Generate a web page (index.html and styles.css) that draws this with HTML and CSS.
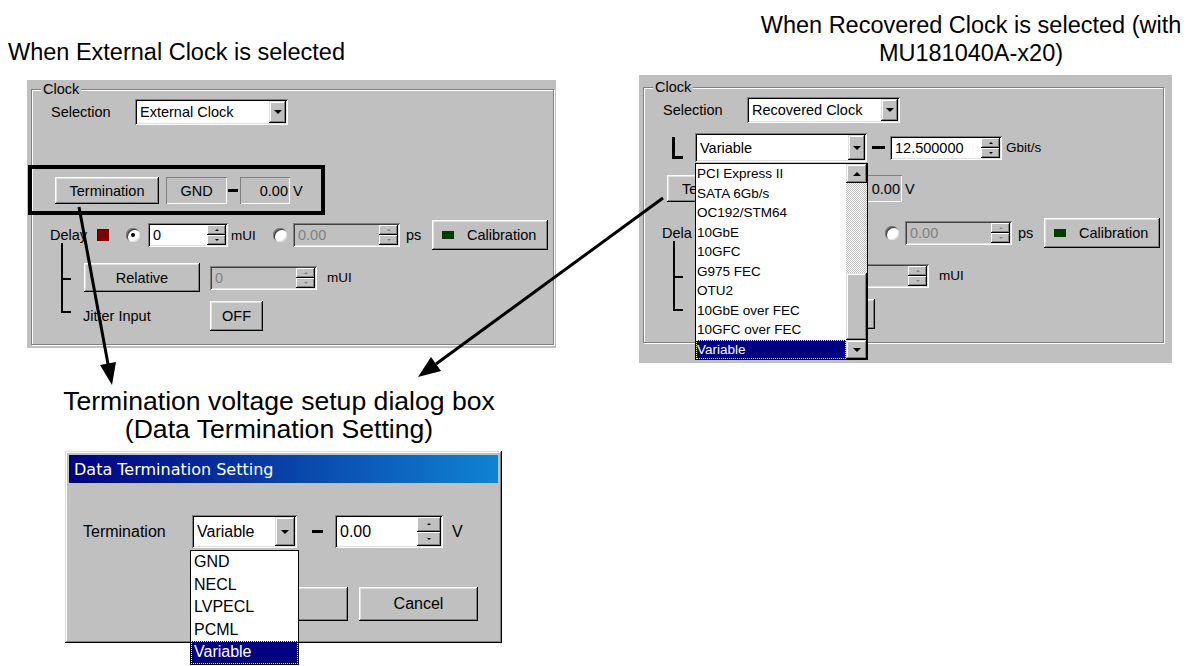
FILE: index.html
```html
<!DOCTYPE html>
<html lang="en">
<head>
  <meta charset="UTF-8">
  <title>Clock Settings</title>
  <link rel="stylesheet" href="styles.css">
</head>
<body>

<div class="page">

  <h2 class="cap cap-ext">When External Clock is selected</h2>
  <h2 class="cap cap-rec">When Recovered Clock is selected (with<br>MU181040A-x20)</h2>
  <h2 class="cap cap-dlg">Termination voltage setup dialog box<br>(Data Termination Setting)</h2>

  <!-- External Clock -->
  <div class="shot shot-ext">
    <fieldset class="group">
      <legend>Clock</legend>
      <div class="row row-sel">
        <span class="lbl lbl-sel">Selection</span>
        <div class="combo combo-sel"><span class="val">External Clock</span><span class="drop"></span></div>
      </div>
      <div class="row row-var"></div>
      <div class="row row-term">
        <button class="btn btn-term">Termination</button>
        <span class="static st-name">GND</span>
        <span class="dash dash-term"></span>
        <span class="static st-volt">0.00</span>
        <span class="unit unit-v">V</span>
      </div>
      <div class="row row-delay">
        <span class="lbl lbl-delay">Delay</span>
        <span class="led led-red"></span>
        <span class="radio radio-a on"></span>
        <div class="spinbox spin-mui"><span class="field">0</span><span class="spin"><i></i><i></i></span></div>
        <span class="unit unit-mui">mUI</span>
        <span class="radio"></span>
        <div class="spinbox spin-ps off"><span class="field">0.00</span><span class="spin"><i></i><i></i></span></div>
        <span class="unit unit-ps">ps</span>
        <button class="btn btn-cal"><span class="led led-green"></span>Calibration</button>
      </div>
      <div class="row row-rel">
        <button class="btn btn-rel">Relative</button>
        <div class="spinbox spin-rel off"><span class="field">0</span><span class="spin"><i></i><i></i></span></div>
        <span class="unit unit-rel">mUI</span>
      </div>
      <div class="row row-jit">
        <span class="lbl lbl-jit">Jitter Input</span>
        <button class="btn btn-off">OFF</button>
      </div>
      <div class="tree"></div>
    </fieldset>
  </div>

  <!-- Recovered Clock (controls under the open list keep no text) -->
  <div class="shot shot-rec">
    <fieldset class="group">
      <legend>Clock</legend>
      <div class="row row-sel">
        <span class="lbl lbl-sel">Selection</span>
        <div class="combo combo-sel"><span class="val">Recovered Clock</span><span class="drop"></span></div>
      </div>
      <div class="row row-var">
        <span class="ell"></span>
        <div class="combo combo-rate"><span class="val">Variable</span><span class="drop"></span></div>
        <span class="dash dash-var"></span>
        <div class="spinbox spin-rate"><span class="field">12.500000</span><span class="spin"><i></i><i></i></span></div>
        <span class="unit unit-rate">Gbit/s</span>
      </div>
      <div class="row row-term">
        <button class="btn btn-term btn-cut">Te</button>
        <span class="static st-name"></span>
        <span class="dash dash-term"></span>
        <span class="static st-volt">0.00</span>
        <span class="unit unit-v">V</span>
      </div>
      <div class="row row-delay">
        <span class="lbl lbl-delay">Dela</span>
        <span class="led led-red"></span>
        <span class="radio radio-a on"></span>
        <div class="spinbox spin-mui"><span class="field"></span><span class="spin"><i></i><i></i></span></div>
        <span class="unit unit-mui"></span>
        <span class="radio"></span>
        <div class="spinbox spin-ps off"><span class="field">0.00</span><span class="spin"><i></i><i></i></span></div>
        <span class="unit unit-ps">ps</span>
        <button class="btn btn-cal"><span class="led led-green"></span>Calibration</button>
      </div>
      <div class="row row-rel">
        <button class="btn btn-rel"></button>
        <div class="spinbox spin-rel off"><span class="field"></span><span class="spin"><i></i><i></i></span></div>
        <span class="unit unit-rel">mUI</span>
      </div>
      <div class="row row-jit">
        <span class="lbl lbl-jit"></span>
        <button class="btn btn-off"></button>
      </div>
      <div class="tree"></div>

      <div class="list list-rate">
        <ul>
          <li>PCI Express II</li>
          <li>SATA 6Gb/s</li>
          <li>OC192/STM64</li>
          <li>10GbE</li>
          <li>10GFC</li>
          <li>G975 FEC</li>
          <li>OTU2</li>
          <li>10GbE over FEC</li>
          <li>10GFC over FEC</li>
          <li class="sel">Variable</li>
        </ul>
        <div class="sbar">
          <span class="sb-btn up"></span>
          <span class="sb-track"></span>
          <span class="sb-thumb"></span>
          <span class="sb-btn down"></span>
        </div>
      </div>
    </fieldset>
  </div>

  <!-- Data Termination Setting dialog -->
  <div class="dialog">
    <div class="titlebar">Data Termination Setting</div>
    <div class="dlg-row">
      <span class="dlg-lbl">Termination</span>
      <div class="combo combo-dlg"><span class="val">Variable</span><span class="drop"></span></div>
      <span class="dash dash-dlg"></span>
      <div class="spinbox spin-dlg"><span class="field">0.00</span><span class="spin"><i></i><i></i></span></div>
      <span class="unit unit-dlg">V</span>
    </div>
    <div class="dlg-btns">
      <button class="btn btn-dlg"></button>
      <button class="btn btn-dlg btn-cancel">Cancel</button>
    </div>
    <div class="list list-dlg">
      <ul>
        <li>GND</li>
        <li>NECL</li>
        <li>LVPECL</li>
        <li>PCML</li>
        <li class="sel">Variable</li>
      </ul>
    </div>
  </div>

  <div class="mark"></div>

  <svg class="arrows" width="1193" height="666" viewBox="0 0 1193 666">
    <line x1="79" y1="207" x2="108" y2="364" stroke="#000" stroke-width="3"/>
    <polygon points="112,385 100,365 116,362" fill="#000"/>
    <line x1="663" y1="198" x2="436" y2="364" stroke="#000" stroke-width="3"/>
    <polygon points="418,377 431,357 441,371" fill="#000"/>
  </svg>

</div>

</body>
</html>
```

FILE: styles.css
```css
* {
  box-sizing: border-box;
}

body {
  margin: 0;
  background: #fff;
  font-family: "Liberation Sans", Arial, sans-serif;
  color: #000;
}

.page {
  position: relative;
  width: 1193px;
  height: 666px;
  overflow: hidden;
}

/* captions */
.cap {
  position: absolute;
  margin: 0;
  font-weight: normal;
  font-size: 23.5px;
  line-height: 28px;
  white-space: nowrap;
}

.cap-ext { left: 8px; top: 38px; }
.cap-rec { left: 741px; width: 460px; top: 11px; text-align: center; }
.cap-dlg { left: 29px; width: 500px; top: 387px; text-align: center; font-size: 26.6px; }

/* screenshot panels */
.shot {
  position: absolute;
  background: #c0c0c0;
  font-size: 14.5px;
}

.shot-ext { left: 27px; top: 80px; width: 529px; height: 268px; padding: 2px 0 0 4px; }
.shot-rec { left: 639px; top: 75px; width: 533px; height: 288px; padding: 5px 0 0 4px; }
.shot-ext .group { width: 523px; }
.shot-rec .group { width: 521px; }

.group {
  position: relative;
  margin: 0;
  padding: 0 0 13px;
  min-width: 0;
  border: 1px solid #808080;
  box-shadow: inset 1px 1px #fff, 1px 1px #fff;
}

.group legend {
  margin-left: 9px;
  padding: 0 2px;
  font-size: 14.5px;
  line-height: 14px;
  background: #c0c0c0;
}

.row {
  display: flex;
  align-items: center;
  white-space: nowrap;
}

.row-sel { margin-top: 3px; height: 26px; padding-left: 19px; }
.row-var { margin-top: 10px; height: 29px; padding-left: 28px; }
.row-term { margin-top: 13px; height: 27px; padding-left: 23px; }
.row-delay { margin-top: 16px; height: 30px; padding-left: 18px; }
.row-rel { margin-top: 13px; height: 29px; padding-left: 52px; }
.row-jit { margin-top: 9px; height: 30px; padding-left: 51px; }

.lbl-sel { width: 84px; }
.combo-sel { width: 153px; }

.ell { width: 11px; height: 22px; border-left: 3px solid #000; border-bottom: 3px solid #000; }
.combo-rate { width: 172px; height: 24px; margin-left: 12px; }
.dash-var { width: 13px; margin-left: 5px; }
.spin-rate { width: 112px; height: 29px; margin-left: 5px; }
.unit-rate { margin-left: 4px; font-size: 13.5px; }

.st-name { width: 61px; margin-left: 7px; }
.dash-term { width: 10px; margin-left: 1px; }
.st-volt { width: 50px; margin-left: 2px; }
.unit-v { margin-left: 3px; }

.lbl-delay { width: 47px; }
.radio-a { margin-left: 17px; }
.spin-mui { width: 80px; margin-left: 8px; }
.unit-mui { width: 42px; margin-left: 3px; font-size: 13.5px; }
.spin-ps { width: 107px; margin-left: 6px; }
.unit-ps { width: 26px; margin-left: 6px; }

.spin-rel { width: 107px; height: 28px; margin-left: 10px; }
.unit-rel { margin-left: 10px; font-size: 13.5px; }

.lbl-jit { width: 127px; }

/* classic widgets */
.combo {
  display: flex;
  height: 100%;
  padding: 2px;
  background: #fff;
  box-shadow: inset 1px 1px #808080, inset -1px -1px #fff, inset 2px 2px #000, inset -2px -2px #dfdfdf;
}

.combo .val {
  flex: 1;
  display: flex;
  align-items: center;
  padding-left: 3px;
  overflow: hidden;
}

.drop {
  position: relative;
  width: 17px;
  background: #c0c0c0;
  box-shadow: inset -1px -1px #000, inset 1px 1px #dfdfdf, inset -2px -2px #808080, inset 2px 2px #fff;
}

.drop::after {
  content: "";
  position: absolute;
  left: 50%;
  top: 50%;
  margin: -2px 0 0 -4px;
  border: 4px solid transparent;
  border-top-color: #000;
  border-bottom: 0;
}

.spinbox {
  display: flex;
  height: 24px;
  padding: 2px;
  background: #fff;
  box-shadow: inset 1px 1px #808080, inset -1px -1px #fff, inset 2px 2px #000, inset -2px -2px #dfdfdf;
}

.spinbox .field {
  flex: 1;
  display: flex;
  align-items: center;
  padding-left: 3px;
}

.spin {
  display: flex;
  flex-direction: column;
  width: 19px;
}

.spin i {
  position: relative;
  flex: 1;
  background: #c0c0c0;
  box-shadow: inset -1px -1px #000, inset 1px 1px #fff, inset -2px -2px #808080;
}

.spin i::after {
  content: "";
  position: absolute;
  left: 50%;
  top: 50%;
  margin: -1px 0 0 -2px;
  border: 2px solid transparent;
  border-bottom-color: #000;
  border-top: 0;
}

.spin i + i::after {
  border-bottom: 0;
  border-top: 2px solid #000;
}

.spinbox.off {
  background: #c0c0c0;
  color: #808080;
  box-shadow: inset 1px 1px #808080, inset -1px -1px #fff, inset 2px 2px #404040, inset -2px -2px #dfdfdf;
}

.spinbox.off .spin i::after { border-bottom-color: #808080; }
.spinbox.off .spin i + i::after { border-top-color: #808080; }

.static {
  display: flex;
  align-items: center;
  justify-content: center;
  height: 100%;
  box-shadow: inset 1px 1px #808080, inset -1px -1px #fff;
}

.st-volt { justify-content: flex-end; padding-right: 2px; }

.dash {
  height: 3px;
  background: #000;
}

.btn {
  height: 100%;
  padding: 0;
  border: 0;
  background: #c0c0c0;
  font: inherit;
  color: #000;
  box-shadow: inset -1px -1px #000, inset 1px 1px #fff, inset -2px -2px #808080, inset 2px 2px #dfdfdf;
}

.btn-term { width: 104px; }
.btn-cut { text-align: left; padding-left: 15px; }
.btn-cal { width: 116px; display: flex; align-items: center; padding-left: 10px; }
.btn-rel { width: 116px; }
.btn-off { width: 53px; }

.radio {
  position: relative;
  width: 14px;
  height: 14px;
  border-radius: 50%;
  background: #fff;
  box-shadow: inset 1px 1px #808080, inset 2px 2px #404040, inset -1px -1px #dfdfdf;
}

.radio.on::after {
  content: "";
  position: absolute;
  left: 5px;
  top: 5px;
  width: 4px;
  height: 4px;
  border-radius: 50%;
  background: #000;
}

.led { flex: none; }
.led-red { width: 12px; height: 12px; background: #800000; box-shadow: inset 1px 1px #5a0000; }
.led-green { width: 12px; height: 8px; margin-right: 13px; background: #003c00; }

.tree {
  position: absolute;
  left: 29px;
  top: 147px;
  width: 10px;
  height: 70px;
  border-left: 2px solid #000;
  border-bottom: 2px solid #000;
}

.tree::before {
  content: "";
  position: absolute;
  left: 0;
  top: 35px;
  width: 8px;
  border-top: 2px solid #000;
}

/* drop-down lists */
.list {
  position: absolute;
  display: flex;
  background: #fff;
  border: 1px solid #000;
  z-index: 2;
}

.list ul {
  flex: 1;
  margin: 0;
  padding: 0;
  list-style: none;
}

.list li {
  padding-left: 1px;
  white-space: nowrap;
}

.list li.sel {
  background: #000080;
  color: #fff;
  outline: 1px dotted #ffff80;
  outline-offset: -1px;
}

.list-rate {
  left: 51px;
  top: 69px;
  width: 173px;
  height: 197px;
  font-size: 13.5px;
  line-height: 19.5px;
}

.sbar {
  display: flex;
  flex-direction: column;
  width: 21px;
}

.sb-btn {
  position: relative;
  height: 19px;
  background: #c0c0c0;
  box-shadow: inset -1px -1px #000, inset 1px 1px #dfdfdf, inset -2px -2px #808080, inset 2px 2px #fff;
}

.sb-btn::after {
  content: "";
  position: absolute;
  left: 50%;
  top: 50%;
  margin: -2px 0 0 -4px;
  border: 4px solid transparent;
  border-top: 0;
  border-bottom-color: #000;
}

.sb-btn.down::after {
  border-bottom: 0;
  border-top: 4px solid #000;
}

.sb-track {
  flex: 1;
  background: repeating-conic-gradient(#c0c0c0 0 25%, #fff 0 50%) 0 0 / 2px 2px;
}

.sb-thumb {
  height: 67px;
  background: #c0c0c0;
  box-shadow: inset -1px -1px #000, inset 1px 1px #dfdfdf, inset -2px -2px #808080, inset 2px 2px #fff;
}

/* dialog */
.dialog {
  position: absolute;
  left: 65px;
  top: 451px;
  width: 437px;
  height: 192px;
  padding: 4px;
  background: #c0c0c0;
  font-size: 16px;
  box-shadow: inset -1px -1px #000, inset 1px 1px #dfdfdf, inset -2px -2px #808080, inset 2px 2px #fff;
}

.titlebar {
  display: flex;
  align-items: center;
  height: 28px;
  padding-left: 5px;
  background: linear-gradient(90deg, #000080, #1084d0);
  color: #fff;
  font-family: "DejaVu Sans", sans-serif;
  font-size: 16px;
}

.dlg-row {
  display: flex;
  align-items: center;
  height: 33px;
  margin-top: 32px;
  padding-left: 14px;
}

.dlg-lbl { width: 109px; }
.combo-dlg { width: 105px; }
.combo-dlg .drop { width: 20px; }
.dash-dlg { width: 11px; margin-left: 15px; }
.spin-dlg { width: 108px; height: 33px; margin-left: 12px; }
.spin-dlg .spin { width: 24px; }
.unit-dlg { margin-left: 9px; }

.dlg-btns {
  display: flex;
  height: 34px;
  margin-top: 39px;
  padding-left: 160px;
}

.btn-dlg { width: 119px; }
.btn-cancel { margin-left: 11px; }

.list-dlg {
  left: 125px;
  top: 99px;
  width: 109px;
  height: 115px;
  line-height: 22.6px;
}

.list-dlg li { padding-left: 3px; }

/* annotations */
.mark {
  position: absolute;
  left: 28px;
  top: 165px;
  width: 297px;
  height: 50px;
  border: 4px solid #000;
}

.arrows {
  position: absolute;
  left: 0;
  top: 0;
  pointer-events: none;
}
```
